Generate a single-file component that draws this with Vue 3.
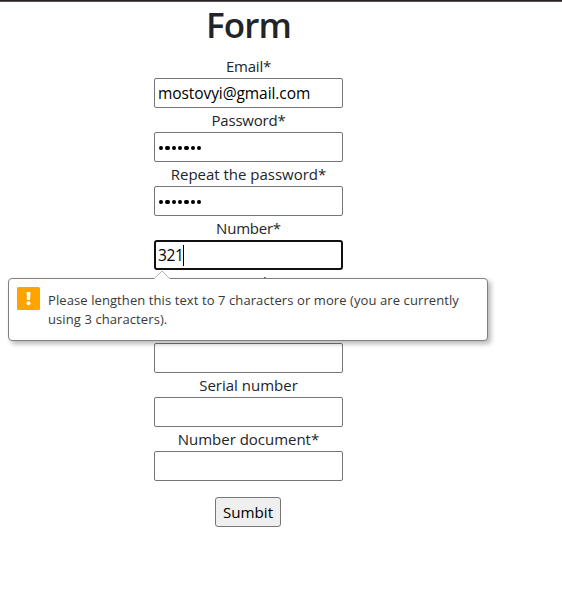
<script setup>
const fields = [
  { label: 'Email*', cls: 'narrow', value: 'mostovyi@gmail.com' },
  { label: 'Password*', cls: 'narrow', dots: 7 },
  { label: 'Repeat the password*', dots: 7 },
  { label: 'Number*', cls: 'narrow', value: '321', focused: true },
  { label: 'User*', select: true },
  { label: 'Document' },
  { label: 'Serial number', cls: 'wide' },
  { label: 'Number document*' },
]
</script>

<template>
  <div class="page">
    <div class="topline"></div>
    <form class="form" @submit.prevent>
      <h1>Form</h1>
      <div v-for="f in fields" :key="f.label" class="field">
        <label><span :class="f.cls">{{ f.label }}</span></label>
        <div class="input" :class="{ focused: f.focused, select: f.select }">
          <span v-if="f.value" class="value">{{ f.value }}</span>
          <template v-if="f.dots"><i v-for="n in f.dots" :key="n" class="dot"></i></template>
          <i v-if="f.focused" class="caret"></i>
        </div>
      </div>
      <button type="submit">Sumbit</button>
    </form>
    <div class="bubble">
      <svg class="arrow" width="18" height="10" viewBox="0 0 18 10">
        <path d="M1 10V9L9 1L17 9V10Z" fill="#fff" />
        <path d="M1 9L9 1L17 9" fill="none" stroke="#b4b4b4" />
      </svg>
      <svg class="warn" width="23" height="23" viewBox="0 0 23 23">
        <rect width="23" height="23" rx="1.5" fill="#ffa300" />
        <path d="M9.5 5H13.5L13 13H10Z" fill="#fff" />
        <circle cx="11.5" cy="16.3" r="2" fill="#fff" />
      </svg>
      <p>Please lengthen this text to 7 characters or more (you are currently<br>using 3 characters).</p>
    </div>
  </div>
</template>

<style>
body { margin: 0; background: #fff; overflow: hidden; }
</style>

<style scoped>
.page {
  position: relative;
  width: 562px;
  height: 592px;
  overflow: hidden;
  font: 16px/24px "Open Sans", "Noto Sans", sans-serif;
  color: #212529;
}
.topline { height: 1px; background: #272323; border-bottom: 1px solid #575354; }
.form {
  width: 189px;
  margin-left: 154px;
  display: flex;
  flex-direction: column;
  align-items: center;
}
h1 {
  margin: 0;
  height: 52px;
  font-size: 35px;
  line-height: 46px;
  font-weight: 600;
  letter-spacing: -0.9px;
  white-space: nowrap;
}
.field { width: 189px; }
label { display: flex; justify-content: center; height: 24px; font-size: 15px; white-space: nowrap; }
label span { letter-spacing: -0.02px; }
label .narrow { letter-spacing: -0.22px; }
label .wide { letter-spacing: 0; }
.input {
  box-sizing: border-box;
  height: 30px;
  border: 1px solid #767676;
  border-radius: 2px;
  padding: 0 3px;
  display: flex;
  align-items: center;
  color: #000;
  background: #fff;
  font-size: 15.5px;
}
.value { letter-spacing: -0.08px; }
.focused { border: 2px solid #101010; border-radius: 3px; padding: 0 2px; }
.focused .value { letter-spacing: -0.4px; }
.select { height: 25px; }
.dot { width: 4.2px; height: 4.6px; margin: 2px 2.15px 0 0; border-radius: 50%; background: #000; }
.dot:first-child { margin-left: 1px; }
.caret { width: 1px; height: 21px; background: #000; }
button {
  box-sizing: border-box;
  width: 66px;
  height: 30px;
  margin: 16px 1px 0 0;
  padding: 0;
  border: 1px solid #767676;
  border-radius: 3px;
  background: #efefef;
  color: #000;
  font: 15.2px/28px "Open Sans", "Noto Sans", sans-serif;
}
.bubble {
  position: absolute;
  left: 8px;
  top: 278px;
  box-sizing: border-box;
  width: 480px;
  height: 63px;
  padding: 8px;
  display: flex;
  gap: 8px;
  border: 1px solid #808080;
  border-radius: 4px;
  background: #fff;
  box-shadow: 3px 3px 5px rgba(0, 0, 0, 0.28);
}
.arrow { position: absolute; left: 144px; top: -9px; }
.warn { flex: none; }
p {
  margin: 4px 0 0;
  font-size: 13px;
  line-height: 19px;
  letter-spacing: 0.09px;
  color: #383838;
  white-space: nowrap;
}
</style>
